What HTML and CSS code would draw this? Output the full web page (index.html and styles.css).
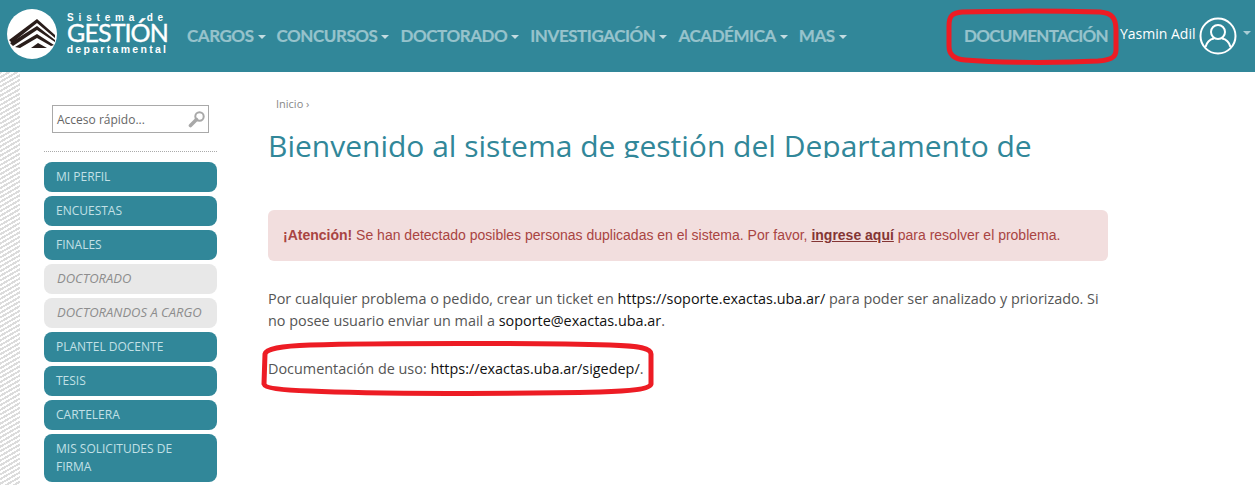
FILE: index.html
```html
<!DOCTYPE html>
<html lang="en">
<head>
  <meta charset="UTF-8">
  <title>Sistema de Gestión Departamental</title>
  <link rel="stylesheet" href="styles.css">
</head>
<body>
  <header class="topbar">
    <div class="brand">
      <svg class="brand-mark" width="50" height="50" viewBox="0 0 50 50">
        <circle cx="25" cy="25" r="25" fill="#fff"/>
        <path d="M2 31 L30 10 L48 26 L48 29 L30 14 L5 34 Z" fill="#2a1d1a"/>
        <path d="M3 34 L30 17 L48 31 L48 33 L30 21 L6 37 Z" fill="#2a1d1a"/>
        <path d="M8 38 L30 25 L47 36 L44 37 L30 29 L13 39 Z" fill="#2a1d1a"/>
        <path d="M24 39 L31 34 L40 39 Z" fill="#2a1d1a"/>
      </svg>
      <div class="brand-text">
        <span class="brand-top">Sistema de</span>
        <span class="brand-main">GESTIÓN</span>
        <span class="brand-bottom">departamental</span>
      </div>
    </div>
    <nav class="main-nav">
      <a class="nav-item caret">CARGOS</a>
      <a class="nav-item caret">CONCURSOS</a>
      <a class="nav-item caret">DOCTORADO</a>
      <a class="nav-item caret">INVESTIGACIÓN</a>
      <a class="nav-item caret">ACADÉMICA</a>
      <a class="nav-item caret">MAS</a>
    </nav>
    <a class="nav-item doc-link">DOCUMENTACIÓN</a>
    <div class="user-box">
      <span class="user-name">Yasmin Adil</span>
      <svg class="user-icon" width="38" height="38" viewBox="0 0 38 38" fill="none" stroke="#fff" stroke-width="2">
        <circle cx="19" cy="19" r="17.5"/>
        <circle cx="19" cy="15" r="7"/>
        <path d="M6.5 30 C8 24.5 12 22 15 21.5 M31.5 30 C30 24.5 26 22 23 21.5"/>
      </svg>
      <span class="user-caret"></span>
    </div>
  </header>

  <div class="page">
    <div class="stripes"></div>
    <aside class="sidebar">
      <div class="search-box">
        <span class="search-text">Acceso rápido...</span>
        <svg width="18" height="18" viewBox="0 0 18 18">
          <circle cx="11.5" cy="6.5" r="4.2" fill="none" stroke="#a8a8a8" stroke-width="2"/>
          <path d="M8.5 9.5 L2.5 15.5" stroke="#a8a8a8" stroke-width="3.6" stroke-linecap="round"/>
        </svg>
      </div>
      <ul class="side-menu">
        <li class="side-item">MI PERFIL</li>
        <li class="side-item">ENCUESTAS</li>
        <li class="side-item">FINALES</li>
        <li class="side-item off">DOCTORADO</li>
        <li class="side-item off">DOCTORANDOS A CARGO</li>
        <li class="side-item">PLANTEL DOCENTE</li>
        <li class="side-item">TESIS</li>
        <li class="side-item">CARTELERA</li>
        <li class="side-item">MIS SOLICITUDES DE FIRMA</li>
      </ul>
    </aside>

    <main class="content">
      <div class="crumbs">Inicio ›</div>
      <h1 class="title">Bienvenido al sistema de gestión del Departamento de</h1>
      <div class="alert"><b>¡Atención!</b> Se han detectado posibles personas duplicadas en el sistema. Por favor, <a class="alert-link">ingrese aquí</a> para resolver el problema.</div>
      <p class="text">Por cualquier problema o pedido, crear un ticket en <a class="link">https://soporte.exactas.uba.ar/</a> para poder ser analizado y priorizado. Si no posee usuario enviar un mail a <a class="link">soporte@exactas.uba.ar</a>.</p>
      <p class="text">Documentación de uso: <a class="link">https://exactas.uba.ar/sigedep/</a>.</p>
    </main>
  </div>

  <!-- red marks drawn by hand over the screenshot -->
  <svg class="marks" width="1255" height="485" viewBox="0 0 1255 485" fill="none" stroke="#ed1c24" stroke-width="5">
    <path d="M962 12 C1000 11 1060 11 1100 12 C1112 13 1116 18 1116 30 L1116 50 C1116 58 1110 60 1098 61 C1060 63 1000 63 965 60 C953 59 949 54 949 46 L949 26 C949 16 952 13 962 12 Z"/>
    <path d="M310 345 C380 343 540 343 610 345 C640 346 651 348 651 354 L651 384 C650 389 630 391 600 392 C520 394 370 394 310 391 C280 390 265 388 264 384 L265 354 C266 349 280 346 310 345 Z"/>
  </svg>
</body>
</html>
```

FILE: styles.css
```css
* {
  box-sizing: border-box;
}
html, body {
  height: 485px;
  overflow: hidden;
}
body {
  margin: 0;
  position: relative;
  background: #fff;
  font-family: 'Open Sans', sans-serif;
  color: #555;
}
.topbar {
  height: 72px;
  background: #318799;
  display: flex;
  align-items: center;
}
.brand {
  flex: none;
  width: 187px;
  display: flex;
  align-items: center;
  padding: 0 0 0 7px;
  height: 100%;
}
.brand-mark {
  flex: none;
  margin-top: -5px;
}
.brand-text {
  width: 101px;
  display: flex;
  flex-direction: column;
  align-items: center;
  margin: -5px 0 0 10px;
  color: #fff;
  font-family: 'Liberation Sans', sans-serif;
  font-weight: bold;
  line-height: 1;
  white-space: nowrap;
}
.brand-top {
  font-size: 10px;
  letter-spacing: 4.8px;
  line-height: 11px;
}
.brand-main {
  font-family: 'Lato', sans-serif;
  font-weight: 400;
  font-size: 25px;
  letter-spacing: -0.9px;
  line-height: 19px;
  -webkit-text-stroke: 0.4px #fff;
}
.brand-bottom {
  font-size: 10.5px;
  letter-spacing: 2.3px;
  line-height: 11px;
  margin-top: 2px;
}
.main-nav {
  display: flex;
  gap: 11px;
  flex: none;
  margin-top: -2px;
}
.nav-item {
  font-family: 'Lato', sans-serif;
  font-weight: bold;
  font-size: 17px;
  letter-spacing: -0.45px;
  color: #97c3cc;
  -webkit-text-stroke: 0.2px #97c3cc;
}
.caret::after {
  content: "";
  display: inline-block;
  margin-left: 4px;
  vertical-align: 3px;
  border-left: 4.5px solid transparent;
  border-right: 4.5px solid transparent;
  border-top: 4.5px solid #c3dce1;
}
.doc-link {
  margin: -2px 12px 0 auto;
  letter-spacing: -0.7px;
}
.user-box {
  flex: none;
  display: flex;
  align-items: center;
  width: 135px;
  color: #fff;
}
.user-name {
  font-size: 14px;
  margin-top: -5px;
  white-space: nowrap;
}
.user-icon {
  flex: none;
  margin-left: 4px;
}
.user-caret {
  margin-left: 6px;
  margin-top: -6px;
  border-left: 4px solid transparent;
  border-right: 4px solid transparent;
  border-top: 4px solid #a9cdd5;
}
.page {
  display: flex;
  height: 413px;
}
.stripes {
  flex: none;
  width: 20px;
  background: repeating-linear-gradient(-30deg, #fff 0, #fff 2px, #dcdcdc 2px, #dcdcdc 4px);
}
.sidebar {
  flex: none;
  width: 173px;
  margin-left: 24px;
  padding-top: 33px;
}
.search-box {
  width: 157px;
  height: 28px;
  margin-left: 8px;
  padding: 0 2px 0 4px;
  border: 1px solid #a9a9a9;
  display: flex;
  align-items: center;
  justify-content: space-between;
}
.search-text {
  font-size: 12px;
  color: #666;
}
.side-menu {
  list-style: none;
  margin: 18px 0 0;
  padding: 10px 0 0;
  border-top: 1px dotted #aaa;
  display: flex;
  flex-direction: column;
  gap: 4px;
}
.side-item {
  min-height: 30px;
  padding: 6px 12px;
  background: #318799;
  border-radius: 8px;
  color: #c2e0e6;
  font-size: 12px;
  line-height: 18px;
}
.side-item.off {
  padding: 5px 12px 7px 13px;
  background: #e8e8e8;
  color: #8d8d8d;
  font-size: 13px;
  font-style: italic;
}
.content {
  flex: none;
  width: 840px;
  margin-left: 51px;
}
.crumbs {
  margin: 25px 0 0 8px;
  font-size: 11px;
  line-height: 14px;
  color: #888;
}
.title {
  height: 33px;
  margin: 14px 0 0;
  overflow: hidden;
  font-size: 30px;
  font-weight: 400;
  line-height: 41px;
  color: #318799;
  white-space: nowrap;
}
.alert {
  height: 51px;
  margin-top: 52px;
  padding: 0 15px;
  background: #f2dede;
  border-radius: 6px;
  color: #a94442;
  font-family: 'Liberation Sans', sans-serif;
  font-size: 14px;
  line-height: 50px;
}
.alert-link {
  font-weight: bold;
  color: #843534;
  text-decoration: underline;
}
.text {
  margin: 0 0 26px;
  font-size: 14.4px;
  line-height: 22px;
  color: #555;
}
.alert + .text {
  margin-top: 27px;
}
.link {
  color: #111;
}
.marks {
  position: absolute;
  left: 0;
  top: 0;
  pointer-events: none;
}
```
